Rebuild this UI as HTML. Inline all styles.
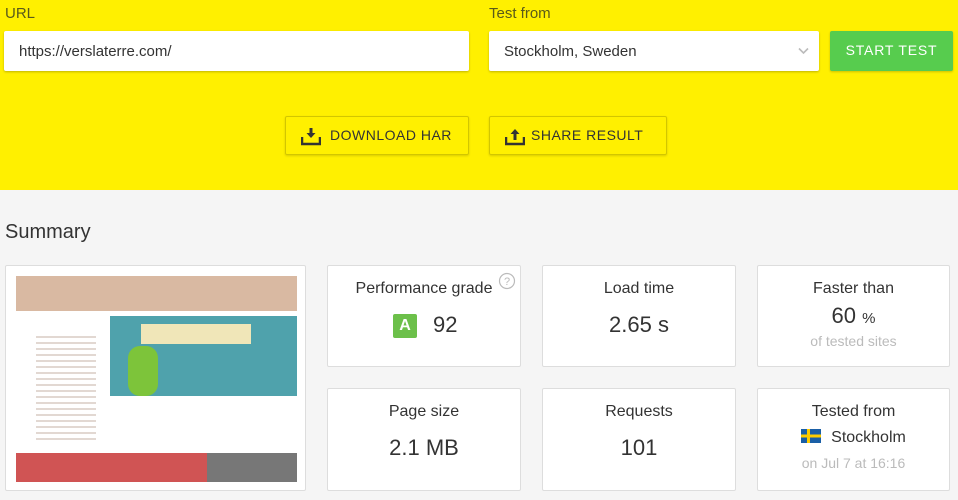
<!DOCTYPE html>
<html><head><meta charset="utf-8"><style>
*{box-sizing:border-box;margin:0;padding:0}
body{width:958px;height:500px;overflow:hidden;background:#f5f5f5;font-family:"Liberation Sans",Arial,sans-serif;color:#333;position:relative}
.top{position:absolute;left:0;top:0;width:958px;height:190px;background:#fff000}
.lbl{position:absolute;top:5px;font-size:15px;color:#5a5a1a}
.inp{position:absolute;top:31px;height:40px;background:#fff;border-radius:2px;box-shadow:0 1px 2px rgba(0,0,0,.25);font-size:15px;color:#333;padding:12px 0 0 15px}
.start{position:absolute;left:830px;top:31px;width:123px;height:40px;background:#57cc4e;border-radius:2px;color:#fff;font-size:14px;letter-spacing:.8px;text-align:center;line-height:38px;box-shadow:0 1px 2px rgba(0,0,0,.2)}
.btn{position:absolute;top:116px;height:39px;border:1px solid #d2c600;border-radius:2px;box-shadow:0 1px 2px rgba(0,0,0,.15);font-size:14px;letter-spacing:.5px;color:#333;line-height:37px}
.btn svg{position:absolute;left:15px;top:9px}
.card{position:absolute;background:#fff;border:1px solid #ddd;border-radius:2px;text-align:center}
.t{font-size:16px;color:#333;margin-top:14px}
.v{font-size:22px;color:#333;margin-top:14px}
.s{font-size:14px;color:#bbb}
</style></head><body>
<div class="top">
<div class="lbl" style="left:5px">URL</div>
<div class="lbl" style="left:489px">Test from</div>
<div class="inp" style="left:4px;width:465px">https://verslaterre.com/</div>
<div class="inp" style="left:489px;width:330px">Stockholm, Sweden<svg style="position:absolute;right:10px;top:16px" width="11" height="8" viewBox="0 0 11 8"><path d="M1 1.5l4.5 4.5 4.5-4.5" stroke="#bbb" stroke-width="1.6" fill="none"/></svg></div>
<div class="start">START TEST</div>
<div class="btn" style="left:285px;width:184px"><svg width="20" height="20" viewBox="0 0 20 20"><path d="M1 11v7h18v-7" stroke="#333" stroke-width="2.5" fill="none"/><path d="M8.5 2h3v5h3l-4.5 5-4.5-5h3z" fill="#333"/></svg><span style="position:absolute;left:44px">DOWNLOAD HAR</span></div>
<div class="btn" style="left:489px;width:178px"><svg width="20" height="20" viewBox="0 0 20 20"><path d="M1 11v7h18v-7" stroke="#333" stroke-width="2.5" fill="none"/><path d="M8.5 14h3v-6h3l-4.5-5-4.5 5h3z" fill="#333"/></svg><span style="position:absolute;left:41px">SHARE RESULT</span></div>
</div>
<div style="position:absolute;left:5px;top:221px;font-size:20px;color:#333">Summary</div>

<div class="card" style="left:5px;top:265px;width:301px;height:226px">
<div style="position:absolute;left:10px;top:10px;width:281px;height:206px;background:#fff;overflow:hidden">
<div style="height:35px;background:#d9b9a2"></div>
<div style="position:absolute;left:94px;top:40px;width:187px;height:80px;background:#4fa2ac"></div>
<div style="position:absolute;left:125px;top:48px;width:110px;height:20px;background:#f0e6b8"></div>
<div style="position:absolute;left:112px;top:70px;width:30px;height:50px;background:#7dc43a;border-radius:12px"></div>
<div style="position:absolute;left:20px;top:56px;width:60px;height:110px;background:repeating-linear-gradient(#fff 0 4px,#e2d8d2 4px 6px)"></div>
<div style="position:absolute;left:0;top:177px;width:191px;height:29px;background:#d05454"></div>
<div style="position:absolute;left:191px;top:177px;width:90px;height:29px;background:#777"></div>
</div></div>

<div class="card" style="left:327px;top:265px;width:194px;height:102px"><div class="t">Performance grade</div>
<svg style="position:absolute;left:170px;top:6px" width="18" height="18" viewBox="0 0 18 18"><circle cx="9" cy="9" r="7.5" fill="none" stroke="#bbb" stroke-width="1.2"/><text x="9" y="13" font-size="11" text-anchor="middle" fill="#bbb" font-family="Liberation Sans">?</text></svg>
<div style="position:absolute;left:65px;top:48px;width:24px;height:24px;background:#6cc04a;border-radius:2px;color:#fff;font-weight:bold;font-size:16px;line-height:24px">A</div>
<div style="position:absolute;left:105px;top:46px;font-size:22px">92</div></div>
<div class="card" style="left:542px;top:265px;width:194px;height:102px"><div class="t">Load time</div><div class="v">2.65 s</div></div>
<div class="card" style="left:757px;top:265px;width:193px;height:102px"><div class="t">Faster than</div><div style="font-size:22px;margin-top:5px">60 <span style="font-size:15px">%</span></div><div class="s" style="margin-top:4px">of tested sites</div></div>
<div class="card" style="left:327px;top:388px;width:194px;height:103px"><div class="t">Page size</div><div class="v">2.1 MB</div></div>
<div class="card" style="left:542px;top:388px;width:194px;height:103px"><div class="t">Requests</div><div class="v">101</div></div>
<div class="card" style="left:757px;top:388px;width:193px;height:103px"><div class="t">Tested from</div>
<div style="margin-top:8px;font-size:16px;position:relative"><span style="display:inline-block;width:20px;height:14px;vertical-align:-1px;margin-right:10px;background:linear-gradient(90deg,transparent 6px,#fecc00 6px 9px,transparent 9px),linear-gradient(transparent 5.5px,#fecc00 5.5px 8.5px,transparent 8.5px),#1a5fa6"></span>Stockholm</div>
<div class="s" style="margin-top:8px">on Jul 7 at 16:16</div></div>
</body></html>
